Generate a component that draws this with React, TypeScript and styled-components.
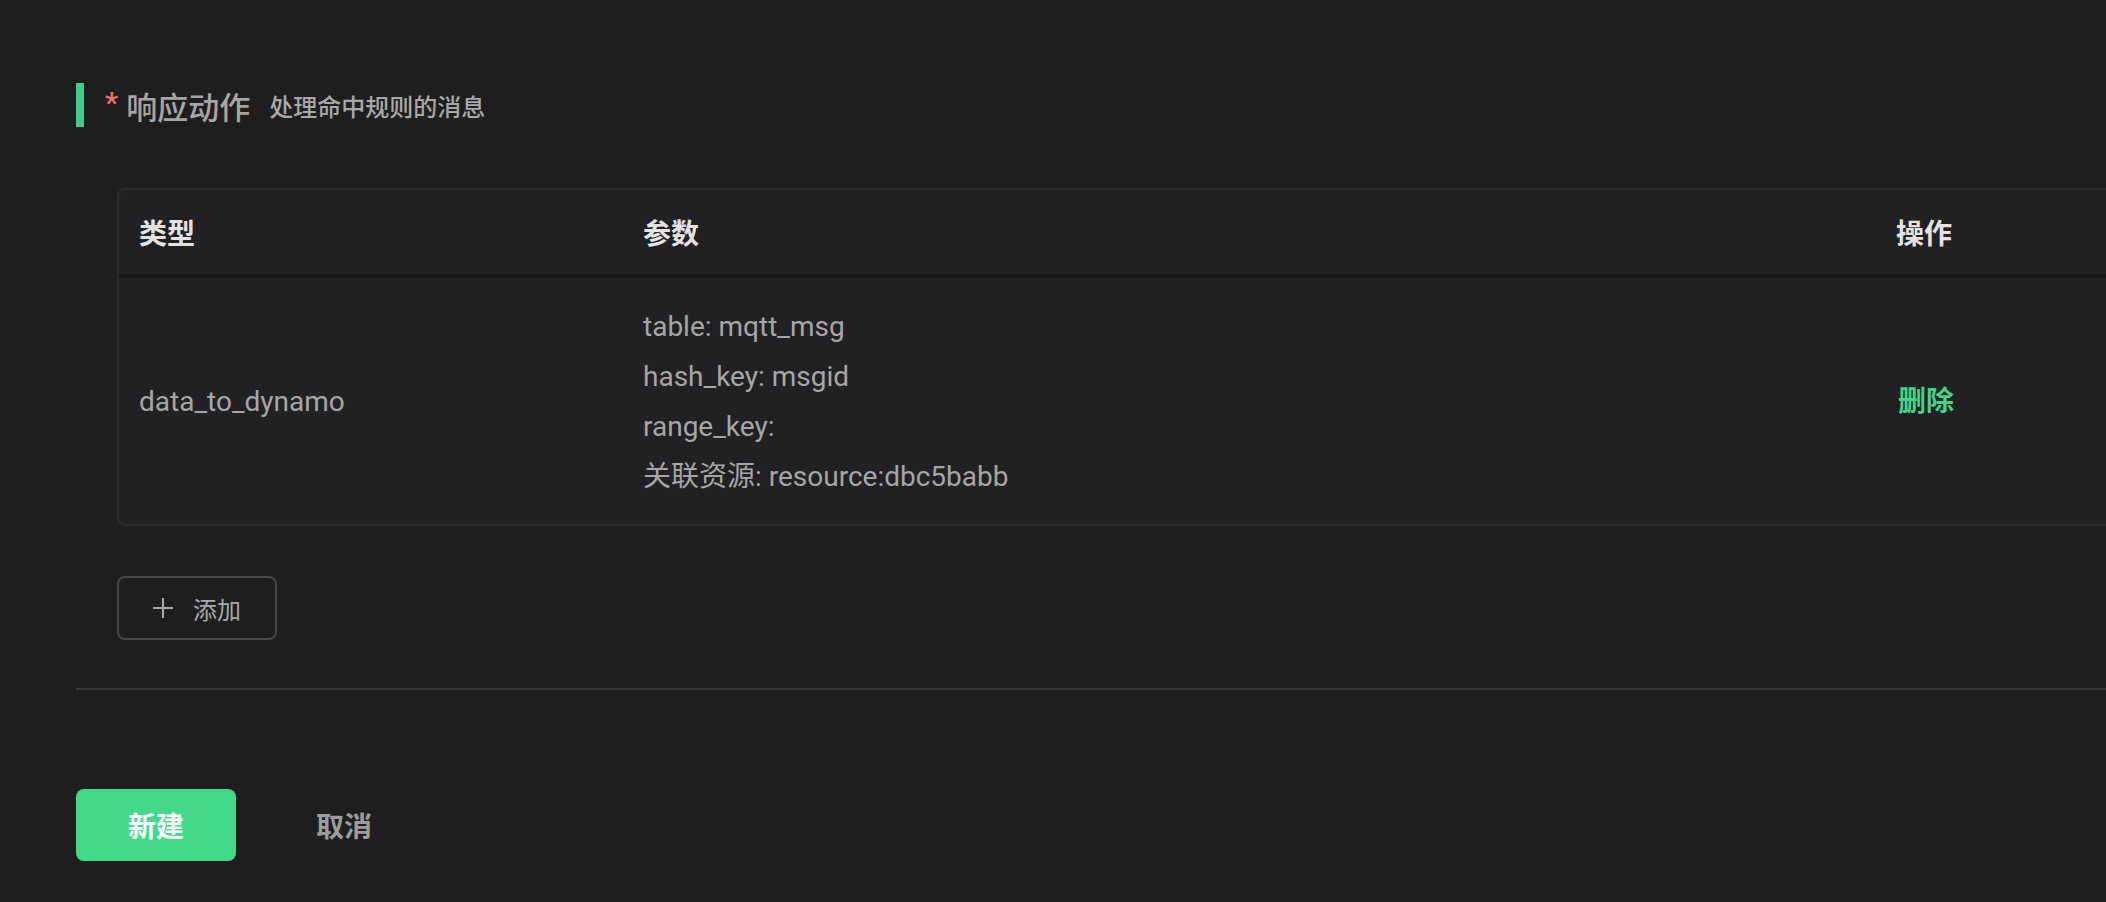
import React from "react";
import styled, { createGlobalStyle } from "styled-components";

const GlobalStyle = createGlobalStyle`
  html, body {
    margin: 0;
    padding: 0;
    background: #1f1e1f;
    overflow: hidden;
  }
  body {
    font-family: Roboto, "Noto Sans CJK SC", sans-serif;
  }
  * { box-sizing: border-box; }
`;

const Page = styled.div`
  width: 2240px;
  padding: 83px 0 40px 76px;
`;

const SectionHeader = styled.div`
  display: flex;
  align-items: center;
  height: 44px;
  border-left: 8px solid #3dcc8a;
  padding-left: 21px;
`;

const Required = styled.span`
  color: #f26b6b;
  font-size: 30px;
  font-weight: 500;
  line-height: 1;
  margin-right: 8px;
  position: relative;
  top: -2px;
`;

const Title = styled.span`
  font-family: "Noto Sans CJK SC", sans-serif;
  font-size: 31px;
  font-weight: 500;
  color: #a6a6a6;
  margin-right: 19px;
`;

const Subtitle = styled.span`
  font-family: "Noto Sans CJK SC", sans-serif;
  font-size: 24px;
  font-weight: 500;
  color: #a8a8a8;
`;

const TableWrap = styled.div`
  margin: 61px 0 0 41px;
  width: 2100px;
  border: 2px solid #2d2c2f;
  border-radius: 8px;
  background: #212022;
  overflow: hidden;
`;

const Row = styled.div<{ $head?: boolean }>`
  display: grid;
  grid-template-columns: 504px 1253px 1fr;
  align-items: center;
  ${(p) =>
    p.$head
      ? `height: 88px; border-bottom: 4px solid #171617;`
      : `padding: 24px 0 22px;`}
`;

const HeadCell = styled.div`
  padding-left: 20px;
  font-family: Roboto, "Noto Sans CJK SC", sans-serif;
  font-size: 28px;
  font-weight: 700;
  color: #e3e3e3;
`;

const Cell = styled.div`
  padding-left: 20px;
  font-size: 28px;
  line-height: 50px;
  color: #a6a6a6;
`;

const ParamLine = styled.div`
  line-height: 50px;
`;

const DeleteLink = styled.span`
  font-size: 28px;
  font-weight: 700;
  color: #40d68b;
  cursor: pointer;
  padding-left: 2px;
`;

const AddButton = styled.button`
  margin: 50px 0 0 41px;
  width: 160px;
  height: 64px;
  display: inline-flex;
  align-items: center;
  justify-content: center;
  gap: 20px;
  background: transparent;
  border: 2px solid #47464b;
  border-radius: 8px;
  color: #a8a8a8;
  font-family: "Noto Sans CJK SC", sans-serif;
  font-size: 24px;
  padding: 0;
  cursor: pointer;
`;

const Divider = styled.div`
  margin-top: 48px;
  height: 2px;
  background: #38373a;
`;

const Footer = styled.div`
  margin-top: 99px;
  display: flex;
  gap: 28px;
`;

const Button = styled.button<{ $primary?: boolean }>`
  width: 160px;
  height: 72px;
  border: none;
  border-radius: 8px;
  font-family: "Noto Sans CJK SC", sans-serif;
  font-size: 28px;
  font-weight: 700;
  cursor: pointer;
  background: ${(p) => (p.$primary ? "#42d98a" : "transparent")};
  color: ${(p) => (p.$primary ? "#ffffff" : "#9c9c9c")};
`;

const PlusIcon = () => (
  <svg width="20" height="20" viewBox="0 0 20 20">
    <path d="M10 0v20M0 10h20" stroke="#a8a8a8" strokeWidth="2" fill="none" />
  </svg>
);

const params = [
  "table: mqtt_msg",
  "hash_key: msgid",
  "range_key:",
  "关联资源: resource:dbc5babb",
];

export default function App() {
  return (
    <>
      <GlobalStyle />
      <Page>
        <SectionHeader>
          <Required>*</Required>
          <Title>响应动作</Title>
          <Subtitle>处理命中规则的消息</Subtitle>
        </SectionHeader>

        <TableWrap>
          <Row $head>
            <HeadCell>类型</HeadCell>
            <HeadCell>参数</HeadCell>
            <HeadCell>操作</HeadCell>
          </Row>
          <Row>
            <Cell>data_to_dynamo</Cell>
            <Cell>
              {params.map((p) => (
                <ParamLine key={p}>{p}</ParamLine>
              ))}
            </Cell>
            <Cell>
              <DeleteLink>删除</DeleteLink>
            </Cell>
          </Row>
        </TableWrap>

        <AddButton>
          <PlusIcon />
          <span>添加</span>
        </AddButton>

        <Divider />

        <Footer>
          <Button $primary>新建</Button>
          <Button>取消</Button>
        </Footer>
      </Page>
    </>
  );
}
